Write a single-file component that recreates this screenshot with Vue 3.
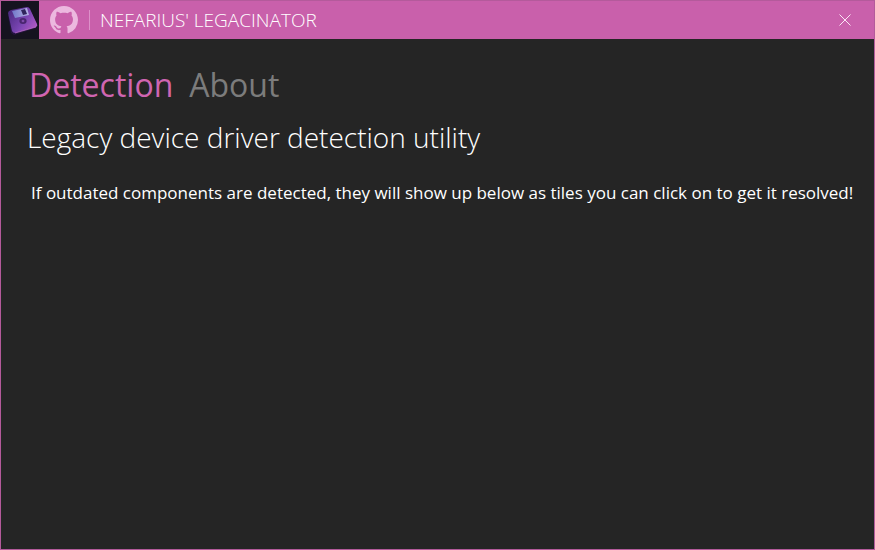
<script setup>
import { ref } from 'vue'

const tabs = ['Detection', 'About']
const active = ref('Detection')
</script>

<template>
  <div class="window">
    <header class="titlebar">
      <svg class="app-icon" viewBox="0 0 38 38" aria-hidden="true">
        <defs>
          <linearGradient id="disk" x1="0" y1="0.2" x2="1" y2="0.8">
            <stop offset="0" stop-color="#4b2a80" />
            <stop offset="0.55" stop-color="#7b46b4" />
            <stop offset="1" stop-color="#b45cc4" />
          </linearGradient>
          <linearGradient id="shutter" x1="0" y1="0" x2="1" y2="0">
            <stop offset="0" stop-color="#6f78c8" />
            <stop offset="1" stop-color="#b9b3e6" />
          </linearGradient>
        </defs>
        <rect width="38" height="38" fill="#15131f" />
        <path d="M7 14L10 32L13 34L35 27L36 24L29 8L26 7Z" fill="#24143f" />
        <path d="M7 12Q7 10 10 9L26 6Q28 6 29 8L36 23Q37 25 35 26L14 32Q12 32 11 30Z" fill="url(#disk)" />
        <path d="M11 10L26 7L28 14L14 17Z" fill="url(#shutter)" />
        <path d="M20 9L24 8L26 13L22 14Z" fill="#30245c" />
        <ellipse cx="22" cy="20" rx="3.6" ry="3" fill="#49256f" />
        <ellipse cx="22" cy="20" rx="1.4" ry="1.2" fill="#7d4aa9" />
        <path d="M14 32L35 26" stroke="#c874d2" stroke-width="0.7" />
      </svg>
      <a class="github" href="https://github.com/nefarius" aria-label="GitHub">
        <svg viewBox="0 0 16 16" aria-hidden="true">
          <path
            fill="currentColor"
            d="M8 0C3.58 0 0 3.58 0 8c0 3.54 2.29 6.53 5.47 7.59.4.07.55-.17.55-.38 0-.19-.01-.82-.01-1.49-2.01.37-2.53-.49-2.69-.94-.09-.23-.48-.94-.82-1.13-.28-.15-.68-.52-.01-.53.63-.01 1.08.58 1.23.82.72 1.21 1.87.87 2.33.66.07-.52.28-.87.51-1.07-1.78-.2-3.64-.89-3.64-3.95 0-.87.31-1.59.82-2.15-.08-.2-.36-1.02.08-2.12 0 0 .67-.21 2.2.82.64-.18 1.32-.27 2-.27s1.36.09 2 .27c1.53-1.04 2.2-.82 2.2-.82.44 1.1.16 1.92.08 2.12.51.56.82 1.27.82 2.15 0 3.07-1.87 3.75-3.65 3.95.29.25.54.73.54 1.48 0 1.07-.01 1.93-.01 2.2 0 .21.15.46.55.38A8.01 8.01 0 0 0 16 8c0-4.42-3.58-8-8-8Z"
          />
        </svg>
      </a>
      <span class="separator"></span>
      <h1 class="title">NEFARIUS' LEGACINATOR</h1>
      <button class="close" type="button" aria-label="Close">
        <svg viewBox="0 0 12 12" aria-hidden="true">
          <path d="M0.5 0.5L11.5 11.5M11.5 0.5L0.5 11.5" stroke="currentColor" stroke-width="1" />
        </svg>
      </button>
    </header>
    <main class="content">
      <nav class="tabs" role="tablist">
        <button
          v-for="tab in tabs"
          :key="tab"
          type="button"
          role="tab"
          :class="['tab', { active: tab === active }]"
          :aria-selected="tab === active"
          @click="active = tab"
        >{{ tab }}</button>
      </nav>
      <h2 class="heading">Legacy device driver detection utility</h2>
      <p class="message">If outdated components are detected, they will show up below as tiles you can click on to get it resolved!</p>
    </main>
  </div>
</template>

<style>
body {
  background: #252525;
}
</style>

<style scoped>
.window {
  box-sizing: border-box;
  min-height: 100vh;
  border: 1px solid #b45a9b;
  background: #252525;
  color: #fff;
  font-family: "Segoe UI", "Open Sans", "Noto Sans", sans-serif;
}

.titlebar {
  display: flex;
  align-items: center;
  height: 38px;
  background: #c960ab;
}

.app-icon {
  width: 38px;
  height: 38px;
}

.github {
  display: flex;
  margin-left: 11px;
  color: #ecb8df;
}

.github svg {
  width: 28px;
  height: 28px;
}

.separator {
  width: 1px;
  height: 20px;
  margin: 0 10px 0 11px;
  background: #dd91c9;
}

.title {
  margin: 0;
  font-size: 19px;
  font-weight: 300;
  line-height: 24px;
  white-space: nowrap;
}

.close {
  display: flex;
  align-items: center;
  justify-content: center;
  width: 58px;
  height: 38px;
  margin-left: auto;
  padding: 0;
  border: 0;
  background: none;
  color: #fbe6f5;
}

.close svg {
  width: 12px;
  height: 12px;
}

.content {
  padding: 22px 16px 22px 26px;
}

.tabs {
  display: flex;
  gap: 16px;
  padding-left: 2px;
}

.tab {
  padding: 0;
  border: 0;
  background: none;
  color: #7c7c7c;
  font: inherit;
  font-size: 32px;
  line-height: 48px;
}

.tab.active {
  color: #d065b1;
}

.heading {
  margin: 8px 0 0;
  font-size: 28px;
  font-weight: 300;
  line-height: 40px;
}

.message {
  margin: 24px 0 0;
  padding-left: 4px;
  font-size: 17px;
  line-height: 24px;
}
</style>
